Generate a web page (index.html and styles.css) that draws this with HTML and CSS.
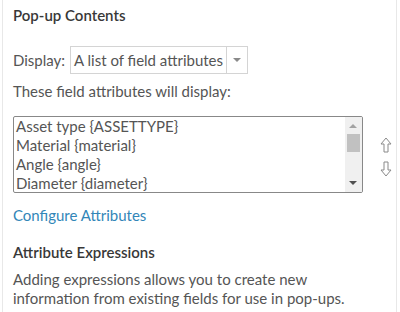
FILE: index.html
```html
<html>

<head>
    <meta charset="utf-8">
    <title>Pop-up Contents</title>
    <link rel="stylesheet" href="styles.css">
</head>

<body>
    <div class="panel">
        <h3 class="title">Pop-up Contents</h3>
        <div class="row">
            <label class="label">Display:</label>
            <div class="select">
                <span class="select-value">A list of field attributes</span>
                <span class="select-arrow"><span class="caret"></span></span>
            </div>
        </div>
        <p class="hint">These field attributes will display:</p>
        <div class="list-row">
            <div class="listbox">
                <ul class="items">
                    <li>Asset type {ASSETTYPE}</li>
                    <li>Material {material}</li>
                    <li>Angle {angle}</li>
                    <li>Diameter {diameter}</li>
                </ul>
                <div class="scrollbar">
                    <span class="sb-up"></span>
                    <span class="sb-thumb"></span>
                    <span class="sb-down"></span>
                </div>
            </div>
            <div class="movers">
                <svg width="12" height="16" viewBox="0 0 12 16">
                    <path d="M6 1 L11 7 L8 7 L8 15 L4 15 L4 7 L1 7 Z" fill="none" stroke="#8a8a8a" stroke-width="1"/>
                </svg>
                <svg width="12" height="16" viewBox="0 0 12 16">
                    <path d="M6 15 L11 9 L8 9 L8 1 L4 1 L4 9 L1 9 Z" fill="none" stroke="#8a8a8a" stroke-width="1"/>
                </svg>
            </div>
        </div>
        <a class="link" href="#">Configure Attributes</a>
        <h3 class="subtitle">Attribute Expressions</h3>
        <p class="text">Adding expressions allows you to create new information from existing fields for use in pop-ups.</p>
    </div>
</body>

</html>
```

FILE: styles.css
```css
body {
    margin: 0;
    background: #fff;
    font: 400 15px/20px Lato, sans-serif;
    color: #555;
}

.panel {
    width: 383px;
    height: 312px;
    margin-left: 2px;
    padding: 0 0 0 10px;
    border-left: 1px solid #e8e8e8;
    border-right: 1px solid #e8e8e8;
    overflow: hidden;
}

.title,
.subtitle {
    margin: 0;
    font-size: 15px;
    line-height: 20px;
    font-weight: 600;
    color: #383838;
}

.title {
    padding-top: 5px;
}

.row {
    display: flex;
    align-items: center;
    margin-top: 21px;
}

.label {
    margin-right: 5px;
}

.select {
    display: flex;
    height: 26px;
    border: 1px solid #d4d4d4;
}

.select-value {
    padding: 0 3px 0 3px;
    line-height: 26px;
}

.select-arrow {
    width: 20px;
    border-left: 1px solid #d4d4d4;
    display: flex;
    align-items: center;
    justify-content: center;
}

.caret {
    width: 0;
    height: 0;
    border-left: 4px solid transparent;
    border-right: 4px solid transparent;
    border-top: 4px solid #8a8a8a;
}

.hint {
    margin: 7px 0 0;
}

.list-row {
    display: flex;
    align-items: center;
    margin-top: 15px;
}

.listbox {
    display: flex;
    width: 348px;
    height: 75px;
    border: 1px solid #888;
    border-radius: 2px;
    overflow: hidden;
}

.items {
    flex: 1;
    margin: 0;
    padding: 0 0 0 2px;
    list-style: none;
}

.items li {
    line-height: 19px;
}

.scrollbar {
    width: 17px;
    background: #f0f0f0;
    position: relative;
}

.sb-up,
.sb-down {
    position: absolute;
    left: 4px;
    width: 0;
    height: 0;
    border-left: 4px solid transparent;
    border-right: 4px solid transparent;
}

.sb-up {
    top: 7px;
    border-bottom: 4px solid #a3a3a3;
}

.sb-down {
    bottom: 7px;
    border-top: 4px solid #505050;
}

.sb-thumb {
    position: absolute;
    top: 17px;
    left: 2px;
    width: 13px;
    height: 18px;
    background: #c1c1c1;
}

.movers {
    display: flex;
    flex-direction: column;
    gap: 8px;
    margin-top: 4px;
    margin-left: 17px;
}

.link {
    display: block;
    margin-top: 12px;
    color: #3286b8;
    text-decoration: none;
}

.subtitle {
    margin-top: 17px;
}

.text {
    margin: 8px 0 0;
    width: 350px;
    line-height: 19px;
}
```
